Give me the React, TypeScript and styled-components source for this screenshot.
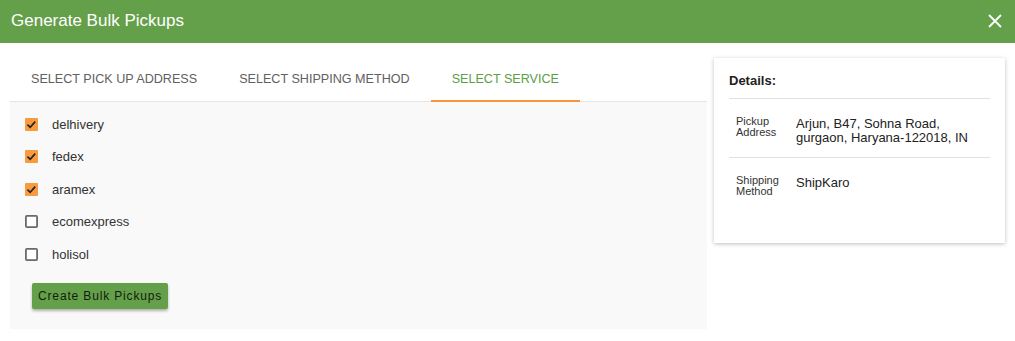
import React from 'react';
import styled, { createGlobalStyle } from 'styled-components';

const services = [
  { name: 'delhivery', checked: true },
  { name: 'fedex', checked: true },
  { name: 'aramex', checked: true },
  { name: 'ecomexpress', checked: false },
  { name: 'holisol', checked: false },
];

const tabs = ['Select Pick Up Address', 'Select Shipping Method', 'Select Service'];

const CheckBox = ({ checked }: { checked: boolean }) =>
  checked ? (
    <svg width="15" height="15" viewBox="0 0 15 15">
      <rect x="1" y="1" width="13" height="13" rx="1" fill="#f89a3f" />
      <path d="M3.5 7.6 L6.2 10.3 L11.2 4.6" fill="none" stroke="#222" strokeWidth="1.6" />
    </svg>
  ) : (
    <svg width="15" height="15" viewBox="0 0 15 15">
      <rect x="1.9" y="1.9" width="11.2" height="11.2" rx="1" fill="#fff" stroke="#6a6a6a" strokeWidth="1.8" />
    </svg>
  );

const App = () => {
  return (
    <>
      <GlobalStyle />
      <Modal>
        <Header>
          <Title>Generate Bulk Pickups</Title>
          <CloseButton aria-label="close">
            <svg width="14" height="14" viewBox="0 0 14 14">
              <path d="M1 1 L13 13 M13 1 L1 13" stroke="#fff" strokeWidth="1.8" />
            </svg>
          </CloseButton>
        </Header>
        <Body>
          <Main>
            <TabBar>
              {tabs.map((t, i) => (
                <Tab key={t} $active={i === 2}>
                  {t}
                </Tab>
              ))}
            </TabBar>
            <ServicePanel>
              {services.map((s) => (
                <ServiceRow key={s.name}>
                  <CheckBox checked={s.checked} />
                  <ServiceName>{s.name}</ServiceName>
                </ServiceRow>
              ))}
              <CreateButton>Create Bulk Pickups</CreateButton>
            </ServicePanel>
          </Main>
          <DetailsCard>
            <DetailsTitle>Details:</DetailsTitle>
            <DetailRow>
              <DetailLabel>
                Pickup
                <br />
                Address
              </DetailLabel>
              <DetailValue>
                Arjun, B47, Sohna Road,
                <br />
                gurgaon, Haryana-122018, IN
              </DetailValue>
            </DetailRow>
            <DetailRow $last>
              <DetailLabel>
                Shipping
                <br />
                Method
              </DetailLabel>
              <DetailValue>ShipKaro</DetailValue>
            </DetailRow>
          </DetailsCard>
        </Body>
      </Modal>
    </>
  );
};

export default App;

const GlobalStyle = createGlobalStyle`
  body {
    margin: 0;
    background: #ffffff;
    font-family: "Liberation Sans", Arial, sans-serif;
  }
`;

const Modal = styled.div`
  width: 1015px;
  height: 341px;
  background: #ffffff;
`;

const Header = styled.div`
  height: 43px;
  background: #64a04a;
  display: flex;
  align-items: center;
  justify-content: space-between;
  padding: 0 13px 0 11px;
  box-sizing: border-box;
`;

const Title = styled.div`
  color: #ffffff;
  font-size: 17px;
  margin-top: -2px;
`;

const CloseButton = styled.div`
  display: flex;
  margin-top: -2px;
`;

const Body = styled.div`
  display: flex;
  align-items: flex-start;
  gap: 7px;
  padding: 15px 10px 0 10px;
`;

const Main = styled.div`
  width: 697px;
`;

const TabBar = styled.div`
  display: flex;
  height: 44px;
  border-bottom: 1px solid #e4e4e4;
  box-sizing: border-box;
`;

const Tab = styled.div<{ $active?: boolean }>`
  padding: 0 21px;
  display: flex;
  align-items: center;
  text-transform: uppercase;
  font-size: 12.6px;
  color: ${(p) => (p.$active ? '#5e9e44' : '#616161')};
  border-bottom: 2px solid ${(p) => (p.$active ? '#f7963c' : 'transparent')};
  margin-bottom: -1px;
`;

const ServicePanel = styled.div`
  background: #f9f9f9;
  padding: 6px 15px 20px 15px;
  height: 227px;
  box-sizing: border-box;
`;

const ServiceRow = styled.div`
  display: flex;
  align-items: center;
  height: 32.5px;
  gap: 13px;
  margin-left: -1px;
`;

const ServiceName = styled.span`
  font-size: 13px;
  color: #333333;
`;

const CreateButton = styled.button`
  margin: 12px 0 0 7px;
  height: 26px;
  padding: 0 6px;
  background: #64a04a;
  border: none;
  border-radius: 2px;
  box-shadow: 0 2px 3px rgba(0, 0, 0, 0.3);
  font-family: "Liberation Sans", Arial, sans-serif;
  font-size: 12px;
  letter-spacing: 0.85px;
  color: #141c10;
`;

const DetailsCard = styled.div`
  width: 291px;
  height: 185px;
  box-sizing: border-box;
  padding: 15px 15px 0 15px;
  background: #ffffff;
  box-shadow: 0 1px 4px rgba(0, 0, 0, 0.25);
`;

const DetailsTitle = styled.div`
  font-size: 13px;
  font-weight: bold;
  color: #222222;
  padding-bottom: 10px;
  border-bottom: 1px solid #e0e0e0;
`;

const DetailRow = styled.div<{ $last?: boolean }>`
  display: flex;
  padding: 17px 0 ${(p) => (p.$last ? '0' : '12px')} 7px;
  border-bottom: ${(p) => (p.$last ? 'none' : '1px solid #e0e0e0')};
`;

const DetailLabel = styled.div`
  width: 60px;
  font-size: 11px;
  line-height: 11px;
  color: #333333;
`;

const DetailValue = styled.div`
  font-size: 13px;
  line-height: 14px;
  color: #222222;
  margin-top: 1px;
`;
